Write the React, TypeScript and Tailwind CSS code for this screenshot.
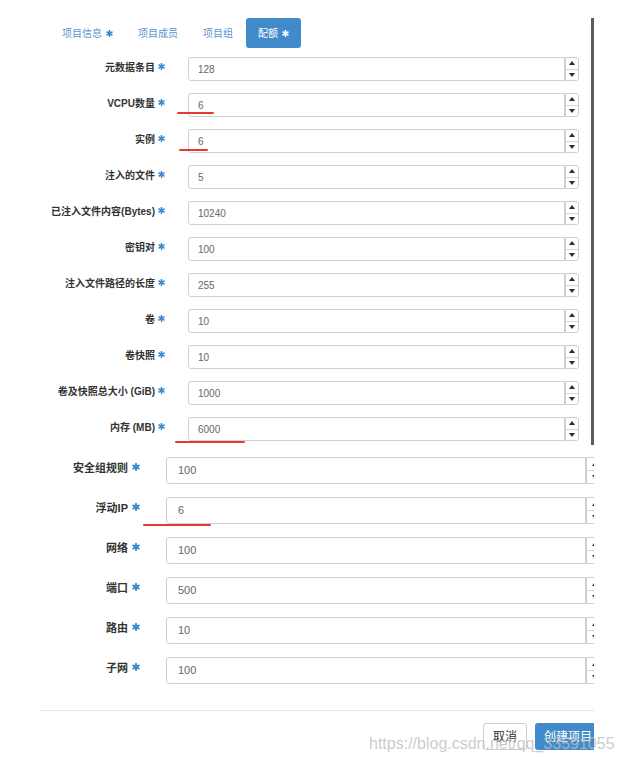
import React from "react";

const FONT = { fontFamily: '"Liberation Sans", "Noto Sans CJK SC", sans-serif' };

function Star({ color = "#428bca", size = 7 }: { color?: string; size?: number }) {
  return (
    <svg width={size} height={size} viewBox="0 0 10 10" className="shrink-0">
      <g stroke={color} strokeWidth="2.4" strokeLinecap="round">
        <line x1="5" y1="1" x2="5" y2="9" />
        <line x1="1.5" y1="3" x2="8.5" y2="7" />
        <line x1="1.5" y1="7" x2="8.5" y2="3" />
      </g>
    </svg>
  );
}

function Spinner({ big }: { big?: boolean }) {
  return (
    <div className={`flex flex-col shrink-0 border border-[#cfcfcf] rounded-r-[3px] bg-white ${big ? "w-[18px]" : "w-[14px]"}`}>
      <div className="flex-1 flex items-center justify-center border-b border-[#d6d6d6]">
        <svg width="6" height="4" viewBox="0 0 6 4"><polygon points="0,4 3,0 6,4" fill="#2d2d2d" /></svg>
      </div>
      <div className="flex-1 flex items-center justify-center">
        <svg width="6" height="4" viewBox="0 0 6 4"><polygon points="0,0 6,0 3,4" fill="#2d2d2d" /></svg>
      </div>
    </div>
  );
}

const topRows: [string, string][] = [
  ["元数据条目", "128"],
  ["VCPU数量", "6"],
  ["实例", "6"],
  ["注入的文件", "5"],
  ["已注入文件内容(Bytes)", "10240"],
  ["密钥对", "100"],
  ["注入文件路径的长度", "255"],
  ["卷", "10"],
  ["卷快照", "10"],
  ["卷及快照总大小 (GiB)", "1000"],
  ["内存 (MB)", "6000"],
];

const bottomRows: [string, string][] = [
  ["安全组规则", "100"],
  ["浮动IP", "6"],
  ["网络", "100"],
  ["端口", "500"],
  ["路由", "10"],
  ["子网", "100"],
];

export default function App() {
  return (
    <div className="relative w-[628px] h-[765px] overflow-hidden bg-white" style={FONT}>
      {/* top section (smaller scale) */}
      <div className="mt-[18px] w-[594px] h-[427px] border-r-[3px] border-[#5c5c5c]">
        <div className="flex h-[30px] pl-[50px] gap-[1px]">
          <div className="flex items-center gap-[4px] px-3 text-[10px] text-[#5b95cf]">
            项目信息 <Star size={7} />
          </div>
          <div className="flex items-center px-3 text-[10px] text-[#5b95cf]">项目成员</div>
          <div className="flex items-center px-3 text-[10px] text-[#5b95cf]">项目组</div>
          <div className="flex items-center gap-[4px] px-3 text-[10px] text-white bg-[#428bca] rounded-[3px]">
            配额 <Star color="#ffffff" size={7} />
          </div>
        </div>
        <div className="mt-[9px] flex flex-col gap-[12px]">
          {topRows.map(([label, value]) => (
            <div key={label} className="flex h-[24px] items-center">
              <div className="w-[165px] flex justify-end items-start gap-[3px] text-[10px] font-bold text-[#333] leading-none -mt-[3px]">
                <span>{label}</span>
                <Star size={7} />
              </div>
              <div className="ml-[23px] w-[377px] h-full flex items-center border border-[#cfcfcf] rounded-l-[3px] pl-[9px] text-[10px] text-[#666]">
                {value}
              </div>
              <div className="h-full flex">
                <Spinner />
              </div>
            </div>
          ))}
        </div>
      </div>

      {/* bottom section (larger scale, clipped) */}
      <div className="w-[594px] overflow-hidden">
        <div className="mt-[12px] flex flex-col gap-[13px]">
          {bottomRows.map(([label, value]) => (
            <div key={label} className="flex h-[27px] items-center">
              <div className="w-[140px] shrink-0 flex justify-end items-start gap-[4px] text-[11px] font-bold text-[#333] leading-none -mt-[4px]">
                <span>{label}</span>
                <Star size={8} />
              </div>
              <div className="ml-[26px] w-[420px] shrink-0 h-full flex items-center border border-[#cfcfcf] rounded-l-[3px] pl-[11px] text-[11px] text-[#666]">
                {value}
              </div>
              <div className="h-full flex">
                <Spinner big />
              </div>
            </div>
          ))}
        </div>
        <div className="mt-[26px] ml-[39px] w-[562px] border-t border-[#e5e5e5] pt-[12px] flex justify-end gap-[8px]">
          <div className="h-[27px] w-[44px] flex items-center justify-center border border-[#cccccc] rounded-[3px] text-[12px] text-[#333]">
            取消
          </div>
          <div className="h-[27px] w-[66px] flex items-center justify-center bg-[#428bca] rounded-[3px] text-[12px] text-white">
            创建项目
          </div>
        </div>
      </div>

      {/* red hand-drawn underlines */}
      <div className="absolute left-[177px] top-[112px] w-[37px] h-[2px] bg-[#e53935] rounded-full" />
      <div className="absolute left-[179px] top-[149px] w-[29px] h-[2px] bg-[#e53935] rounded-full" />
      <div className="absolute left-[175px] top-[441px] w-[70px] h-[2px] bg-[#e53935] rounded-full" />
      <div className="absolute left-[143px] top-[524px] w-[68px] h-[2px] bg-[#e53935] rounded-full" />

      {/* watermark */}
      <div className="absolute left-[369px] top-[736px] text-[16px] leading-none text-[rgba(190,190,190,0.8)] whitespace-nowrap">
        https://blog.csdn.net/qq_33591055
      </div>
    </div>
  );
}
